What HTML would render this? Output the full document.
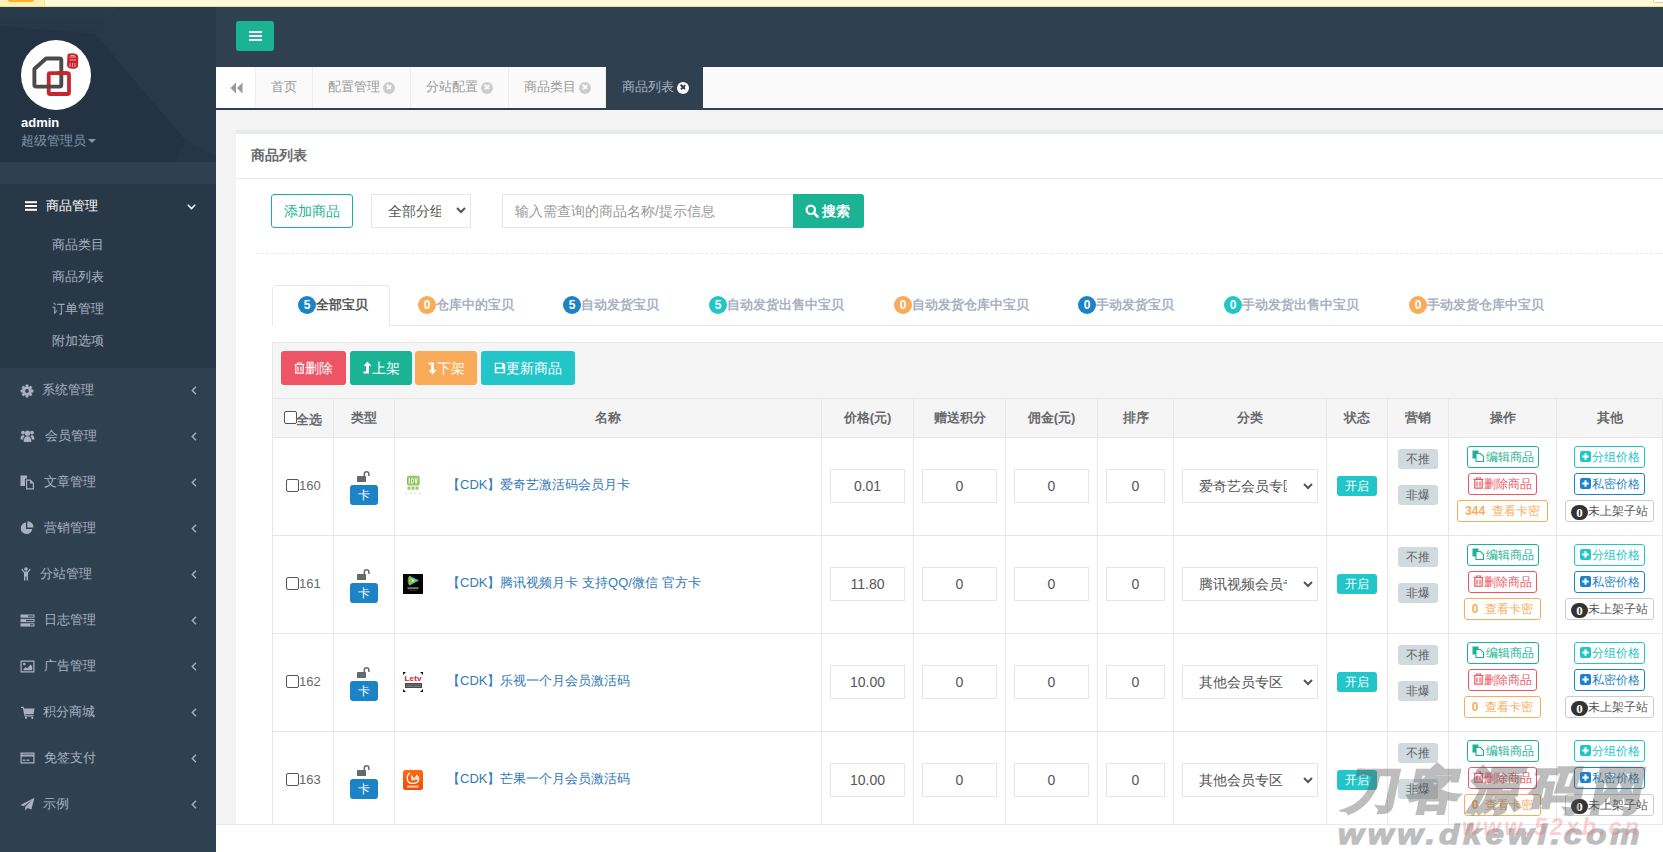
<!DOCTYPE html><html><head><meta charset="utf-8"><style>
*{box-sizing:border-box}
html,body{margin:0;padding:0;width:1663px;height:852px;overflow:hidden;background:#f3f3f4;font-family:"Liberation Sans",sans-serif;color:#676a6c;font-size:13px}
.a{position:absolute}
#topbar{position:absolute;left:0;top:0;width:1663px;height:7px;background:#fff8d9;border-bottom:1px solid #f1dd9a}
#side{position:absolute;left:0;top:7px;width:216px;height:845px;background:#2f4050;overflow:hidden}
.mi{position:absolute;left:0;width:216px;height:46px;color:#a7b1c2;font-size:13px}
.mi .t{position:absolute;top:0;line-height:46px;font-weight:normal;white-space:nowrap}
.mi svg.ic{position:absolute;top:16px}
.mi .ar{position:absolute;left:191px;top:19px}
.sub{position:absolute;left:52px;color:#a7b1c2;font-size:13px;line-height:32px;height:32px;white-space:nowrap}
#header{position:absolute;left:216px;top:7px;width:1447px;height:60px;background:#2f4050}
#tabs{position:absolute;left:216px;top:67px;width:1447px;height:43px;background:#fafafa;border-bottom:2px solid #2f4050}
.tab{position:absolute;top:0;height:41px;line-height:40px;color:#999;font-size:13px;border-right:1px solid #eee;white-space:nowrap}
.tab .x{display:inline-block;width:12px;height:12px;border-radius:50%;background:#ccc;position:relative;vertical-align:middle;margin-left:3px;top:0px}
.tab .x:before,.tab .x:after{content:"";position:absolute;left:5.3px;top:2.8px;width:1.5px;height:6.4px;background:#fafafa;transform:rotate(45deg)}
.tab .x:after{transform:rotate(-45deg)}
.card{position:absolute;left:236px;top:130px;width:1427px;height:722px;background:#fff;border-top:4px solid #e7eaec}
.btn{position:absolute;border-radius:3px;font-size:14px;text-align:center;white-space:nowrap}
.inp{position:absolute;border:1px solid #e5e6e7;background:#fff;font-size:14px;white-space:nowrap;overflow:hidden}
.bt{position:absolute;top:285px;height:41px;white-space:nowrap;font-size:13px;font-weight:600;color:#a7b1c2;line-height:40px}
.badge{display:inline-block;width:18px;height:18px;border-radius:9px;color:#fff;font-size:12px;font-weight:bold;line-height:18px;text-align:center;vertical-align:middle;position:relative;top:-1px}
.cols{position:absolute;top:398px;left:272px;width:1391px;height:427px}
.vl{position:absolute;top:0;width:1px;height:426px;background:#e7e7e7}
.hl{position:absolute;left:0;width:1390px;height:1px;background:#e7e7e7}
.th{position:absolute;top:0;height:39px;line-height:39px;text-align:center;font-weight:bold;font-size:13px;color:#676a6c;white-space:nowrap}
.cell{position:absolute;white-space:nowrap}
.ibox{position:absolute;width:75px;height:33px;border:1px solid #e5e6e7;text-align:center;line-height:31px;font-size:14px;color:#555;background:#fff}
.ob{position:absolute;height:22px;border:1px solid;border-radius:3px;font-size:12px;line-height:20px;text-align:center;white-space:nowrap;background:#fff}
.gl{position:absolute;left:1398px;width:40px;height:20px;border-radius:3px;background:#d1dade;color:#5e5e5e;font-size:12px;line-height:20px;text-align:center}
</style></head><body>
<div id="side">
<div class="a" style="left:0;top:0;width:216px;height:155px;overflow:hidden">
  <svg width="216" height="155" style="position:absolute;left:0;top:0">
   <defs><linearGradient id="g1" x1="0" y1="0" x2="0" y2="1"><stop offset="0" stop-color="#2a3b4b"/><stop offset="1" stop-color="#263747"/></linearGradient></defs>
   <rect width="216" height="155" fill="#243544"/>
   <polygon points="0,0 118,0 95,27 0,19" fill="url(#g1)"/>
   <polygon points="118,0 216,0 216,150 185,133 95,27" fill="#283949"/>
   <polygon points="0,19 95,27 185,133 176,155 0,155" fill="#233343"/>
   <polygon points="185,133 216,150 216,155 176,155" fill="#253646"/>
  </svg>
  <div class="a" style="left:21px;top:33px;width:70px;height:70px;border-radius:50%;background:#fff"></div>
  <svg class="a" style="left:21px;top:33px" width="70" height="70" viewBox="0 0 70 70">
   <rect x="27.7" y="33.2" width="20.3" height="20.8" rx="1.5" fill="none" stroke="#c8262e" stroke-width="3.8"/>
   <path d="M13.4 29 L25 18.5 L38.5 18.5 Q40.3 18.5 40.3 20.3 L40.3 44.8 Q40.3 46.6 38.5 46.6 L15.2 46.6 Q13.4 46.6 13.4 44.8 Z" fill="none" stroke="#4e4948" stroke-width="3.9" stroke-linejoin="round"/>
   <path d="M36 33.2 H46.2" stroke="#c8262e" stroke-width="3.8"/>
   <path d="M46.5 14.5 Q48 13 52 13.2 Q57.5 13.5 57.3 18 L57 26 Q56.5 29 51.5 28.8 Q46 28.5 46 25 Z" fill="#c8262e"/>
   <path d="M48.5 17 H55 M48.5 20 H55 M49 23 V27 M51.5 23 V27 M54 23 V27 M49.5 15.5 L53.5 15.5" stroke="#f3c6c8" stroke-width="0.8" fill="none"/>
  </svg>
  <div class="a" style="left:21px;top:108px;color:#fff;font-weight:bold;font-size:13px;line-height:16px">admin</div>
  <div class="a" style="left:21px;top:126px;color:#8095a8;font-size:13px;line-height:16px;white-space:nowrap">超级管理员<span style="display:inline-block;width:0;height:0;border-left:4px solid transparent;border-right:4px solid transparent;border-top:4px solid #8095a8;margin-left:2px;vertical-align:middle;position:relative;top:-1px"></span></div>
 </div>
<div class="a" style="left:0;top:177px;width:216px;height:184px;background:#293846"></div>
<svg class="a" style="left:25px;top:194px" width="12" height="10" viewBox="0 0 12 10"><g fill="#fff"><rect y="0.2" width="12" height="2"/><rect y="4" width="12" height="2"/><rect y="7.8" width="12" height="2"/></g></svg>
<div class="a" style="left:46px;top:189px;color:#fff;font-weight:normal;font-size:13px;line-height:20px">商品管理</div>
<svg class="a" style="left:187px;top:197px" width="9" height="6" viewBox="0 0 9 6"><path d="M0.8 0.8 L4.5 4.6 L8.2 0.8" fill="none" stroke="#fff" stroke-width="1.5"/></svg>
<div class="sub" style="top:222px">商品类目</div>
<div class="sub" style="top:254px">商品列表</div>
<div class="sub" style="top:286px">订单管理</div>
<div class="sub" style="top:318px">附加选项</div>
<div class="mi" style="top:360px"><svg class="ic" width="14" height="14" viewBox="0 0 14 14" style="left:20px;top:17px"><g fill="#a7b1c2"><circle cx="7" cy="7" r="4.6"/><rect x="5.6" y="0.6" width="2.8" height="12.8" rx="0.6"/><rect x="0.6" y="5.6" width="12.8" height="2.8" rx="0.6"/><rect x="5.6" y="0.6" width="2.8" height="12.8" rx="0.6" transform="rotate(45 7 7)"/><rect x="5.6" y="0.6" width="2.8" height="12.8" rx="0.6" transform="rotate(-45 7 7)"/></g><circle cx="7" cy="7" r="1.9" fill="#2f4050"/></svg><div class="t" style="left:42px">系统管理</div><svg class="ar" width="6" height="9" viewBox="0 0 6 9"><path d="M5 0.8 L1.3 4.5 L5 8.2" fill="none" stroke="#a7b1c2" stroke-width="1.4"/></svg></div>
<div class="mi" style="top:406px"><svg class="ic" width="15" height="14" viewBox="0 0 15 14" style="left:20px;top:16px"><g fill="#a7b1c2"><circle cx="7.5" cy="4.2" r="2.6"/><circle cx="3" cy="3.6" r="1.9"/><circle cx="12" cy="3.6" r="1.9"/><path d="M3.6 13 Q3.6 7.2 7.5 7.2 Q11.4 7.2 11.4 13 Z"/><path d="M0.6 10.5 Q0.6 6.2 3 6.2 Q4.2 6.2 4.6 6.9 Q3.2 8 3.1 10.5Z"/><path d="M14.4 10.5 Q14.4 6.2 12 6.2 Q10.8 6.2 10.4 6.9 Q11.8 8 11.9 10.5Z"/></g></svg><div class="t" style="left:45px">会员管理</div><svg class="ar" width="6" height="9" viewBox="0 0 6 9"><path d="M5 0.8 L1.3 4.5 L5 8.2" fill="none" stroke="#a7b1c2" stroke-width="1.4"/></svg></div>
<div class="mi" style="top:452px"><svg class="ic" width="15" height="15" viewBox="0 0 15 15" style="left:20px;top:16px"><g fill="#a7b1c2"><path d="M0.5 0.5 H7 V3.5 H5 V11 H0.5Z"/><path d="M6 4.5 H10.5 L14 8 V14.5 H6Z M7.2 5.7 V13.3 H12.8 V8.5 H10 V5.7Z"/></g></svg><div class="t" style="left:44px">文章管理</div><svg class="ar" width="6" height="9" viewBox="0 0 6 9"><path d="M5 0.8 L1.3 4.5 L5 8.2" fill="none" stroke="#a7b1c2" stroke-width="1.4"/></svg></div>
<div class="mi" style="top:498px"><svg class="ic" width="14" height="14" viewBox="0 0 14 14" style="left:20px;top:16px"><g fill="#a7b1c2"><path d="M6 1.5 A5.8 5.8 0 1 0 12.3 8 H6Z"/><path d="M7.3 0.3 A6 6 0 0 1 13.5 6.6 H7.3Z"/></g></svg><div class="t" style="left:44px">营销管理</div><svg class="ar" width="6" height="9" viewBox="0 0 6 9"><path d="M5 0.8 L1.3 4.5 L5 8.2" fill="none" stroke="#a7b1c2" stroke-width="1.4"/></svg></div>
<div class="mi" style="top:544px"><svg class="ic" width="10" height="14" viewBox="0 0 10 14" style="left:21px;top:16px"><g fill="#a7b1c2"><circle cx="5" cy="2" r="1.8"/><path d="M0.3 2.4 L1.3 1.8 L3.4 4.4 H6.6 L8.7 1.8 L9.7 2.4 L7 6 V13.5 H5.6 V9.5 H4.4 V13.5 H3 V6Z"/></g></svg><div class="t" style="left:40px">分站管理</div><svg class="ar" width="6" height="9" viewBox="0 0 6 9"><path d="M5 0.8 L1.3 4.5 L5 8.2" fill="none" stroke="#a7b1c2" stroke-width="1.4"/></svg></div>
<div class="mi" style="top:590px"><svg class="ic" width="15" height="13" viewBox="0 0 15 13" style="left:20px;top:17px"><g fill="#a7b1c2"><rect x="0.5" y="0.5" width="14" height="3.2"/><rect x="0.5" y="4.9" width="14" height="3.2"/><rect x="0.5" y="9.3" width="14" height="3.2"/></g><g fill="#2f4050"><rect x="8" y="1.5" width="5.5" height="1.2"/><rect x="6" y="5.9" width="7.5" height="1.2"/><rect x="10" y="10.3" width="3.5" height="1.2"/></g></svg><div class="t" style="left:44px">日志管理</div><svg class="ar" width="6" height="9" viewBox="0 0 6 9"><path d="M5 0.8 L1.3 4.5 L5 8.2" fill="none" stroke="#a7b1c2" stroke-width="1.4"/></svg></div>
<div class="mi" style="top:636px"><svg class="ic" width="15" height="13" viewBox="0 0 15 13" style="left:20px;top:17px"><path d="M0.5 0.5 H14.5 V12.5 H0.5Z M1.7 1.7 V11.3 H13.3 V1.7Z" fill="#a7b1c2"/><path d="M2.8 10.2 L5.5 7 L7.2 8.5 L10.5 4.5 L12.2 6.5 V10.2Z" fill="#a7b1c2"/><circle cx="4.3" cy="4" r="1.3" fill="#a7b1c2"/></svg><div class="t" style="left:44px">广告管理</div><svg class="ar" width="6" height="9" viewBox="0 0 6 9"><path d="M5 0.8 L1.3 4.5 L5 8.2" fill="none" stroke="#a7b1c2" stroke-width="1.4"/></svg></div>
<div class="mi" style="top:682px"><svg class="ic" width="14" height="13" viewBox="0 0 14 13" style="left:21px;top:17px"><g fill="#a7b1c2"><path d="M0 0.8 H2.6 L3.1 2.6 H13.6 L12.4 8.2 H4.2 L4.5 9.3 H12.5 V10.5 H3.6 L1.8 2 H0Z"/><circle cx="5" cy="11.8" r="1.1"/><circle cx="11.3" cy="11.8" r="1.1"/></g></svg><div class="t" style="left:43px">积分商城</div><svg class="ar" width="6" height="9" viewBox="0 0 6 9"><path d="M5 0.8 L1.3 4.5 L5 8.2" fill="none" stroke="#a7b1c2" stroke-width="1.4"/></svg></div>
<div class="mi" style="top:728px"><svg class="ic" width="15" height="12" viewBox="0 0 15 12" style="left:20px;top:17px"><path d="M0.5 0.5 H14.5 V11.5 H0.5Z M1.7 4.6 V10.3 H13.3 V4.6Z M1.7 1.7 V2.6 H13.3 V1.7Z" fill="#a7b1c2"/><rect x="2.7" y="7.6" width="2.6" height="1.2" fill="#a7b1c2"/><rect x="6.3" y="7.6" width="3" height="1.2" fill="#a7b1c2"/></svg><div class="t" style="left:44px">免签支付</div><svg class="ar" width="6" height="9" viewBox="0 0 6 9"><path d="M5 0.8 L1.3 4.5 L5 8.2" fill="none" stroke="#a7b1c2" stroke-width="1.4"/></svg></div>
<div class="mi" style="top:774px"><svg class="ic" width="15" height="14" viewBox="0 0 15 14" style="left:20px;top:16px"><path d="M14.5 0.8 L0.5 8 L3.8 9.3 L12.2 2.8 L5.2 10 V13.6 L7.6 11 L11.3 12.5Z" fill="#a7b1c2"/></svg><div class="t" style="left:43px">示例</div><svg class="ar" width="6" height="9" viewBox="0 0 6 9"><path d="M5 0.8 L1.3 4.5 L5 8.2" fill="none" stroke="#a7b1c2" stroke-width="1.4"/></svg></div>
</div>
<div id="topbar"><div class="a" style="left:0;top:0;width:45px;height:6px;background:#fdf0b4;border-right:1px solid #f3e2a4"></div><div class="a" style="left:8px;top:0;width:26px;height:2px;background:#ffb12b;border-radius:0 0 2px 2px"></div><div class="a" style="left:1653px;top:0;width:10px;height:3px;border:1px solid #e8d48a;border-top:0;border-right:0;border-radius:0 0 0 2px;background:#fff"></div></div>
<div id="header"><div class="a" style="left:20px;top:14px;width:38px;height:30px;background:#1ab394;border-radius:3px"></div>
<svg class="a" style="left:33px;top:24px" width="13" height="10" viewBox="0 0 13 10"><g fill="#fff"><rect y="0" width="13" height="2"/><rect y="4" width="13" height="2"/><rect y="8" width="13" height="2"/></g></svg></div>
<div id="tabs">
 <div class="a" style="left:0;top:0;width:40px;height:41px;background:#fff;border-right:1px solid #eee"></div>
 <svg class="a" style="left:14px;top:15px" width="13" height="12" viewBox="0 0 13 12"><path d="M6 0.5 L0.5 6 L6 11.5Z M12.5 0.5 L7 6 L12.5 11.5Z" fill="#999"/></svg>
 <div class="tab" style="left:40px;width:57px;padding-left:15px">首页</div>
 <div class="tab" style="left:97px;width:98px;padding-left:15px">配置管理<span class="x"></span></div>
 <div class="tab" style="left:195px;width:98px;padding-left:15px">分站配置<span class="x"></span></div>
 <div class="tab" style="left:293px;width:97px;padding-left:15px">商品类目<span class="x"></span></div>
 <div class="tab" style="left:390px;width:97px;padding-left:16px;background:#2f4050;color:#a7b1c2;border-right:0">商品列表<span class="x" style="background:#fff"></span></div>
</div>
<style>#tabs .tab:last-child .x:before,#tabs .tab:last-child .x:after{background:#2f4050}</style>
<div class="card"></div>
<div class="a" style="left:251px;top:146px;font-size:14px;font-weight:bold;color:#676a6c;line-height:18px">商品列表</div>
<div class="a" style="left:236px;top:178px;width:1427px;height:1px;background:#e7eaec"></div>
<div class="btn" style="left:271px;top:194px;width:82px;height:34px;border:1px solid #1ab394;color:#1ab394;line-height:32px;background:#fff">添加商品</div>
<div class="inp" style="left:371px;top:194px;width:100px;height:34px;color:#555;line-height:32px;padding-left:16px"><span style="display:inline-block;width:53px;overflow:hidden;vertical-align:top;white-space:nowrap">全部分组</span></div>
<svg class="a" style="left:456px;top:207px" width="10" height="7" viewBox="0 0 10 7"><path d="M1 1 L5 5 L9 1" fill="none" stroke="#555" stroke-width="2"/></svg>
<div class="inp" style="left:502px;top:194px;width:292px;height:34px;color:#999;line-height:32px;padding-left:12px">输入需查询的商品名称/提示信息</div>
<div class="btn" style="left:793px;top:194px;width:71px;height:34px;background:#1ab394;color:#fff;line-height:34px;font-weight:bold;border-radius:0 3px 3px 0;padding-left:12px;text-align:left">
<svg style="position:absolute;left:12px;top:10px" width="14" height="14" viewBox="0 0 14 14"><circle cx="5.8" cy="5.8" r="4.2" fill="none" stroke="#fff" stroke-width="2.2"/><path d="M8.8 8.8 L12.5 12.5" stroke="#fff" stroke-width="2.6" stroke-linecap="round"/></svg><span style="position:absolute;left:29px;top:0">搜索</span></div>
<div class="a" style="left:256px;top:253px;width:1407px;height:0;border-top:1px dashed #e7eaec"></div>
<div class="a" style="left:272px;top:325px;width:1391px;height:1px;background:#e7eaec"></div>
<div class="a" style="left:272px;top:285px;width:118px;height:41px;background:#fff;border:1px solid #e7eaec;border-bottom:0;border-radius:4px 4px 0 0"></div>
<div class="bt" style="left:298px;color:#555"><span class="badge" style="background:#1c84c6">5</span>全部宝贝</div>
<div class="bt" style="left:418px;"><span class="badge" style="background:#f8ac59">0</span>仓库中的宝贝</div>
<div class="bt" style="left:563px;"><span class="badge" style="background:#1c84c6">5</span>自动发货宝贝</div>
<div class="bt" style="left:709px;"><span class="badge" style="background:#23c6c8">5</span>自动发货出售中宝贝</div>
<div class="bt" style="left:894px;"><span class="badge" style="background:#f8ac59">0</span>自动发货仓库中宝贝</div>
<div class="bt" style="left:1078px;"><span class="badge" style="background:#1c84c6">0</span>手动发货宝贝</div>
<div class="bt" style="left:1224px;"><span class="badge" style="background:#23c6c8">0</span>手动发货出售中宝贝</div>
<div class="bt" style="left:1409px;"><span class="badge" style="background:#f8ac59">0</span>手动发货仓库中宝贝</div>
<div class="a" style="left:272px;top:342px;width:1391px;height:57px;background:#f5f5f5;border:1px solid #e7e7e7;border-bottom:0;border-right:0"></div>
<div class="btn" style="left:281px;top:351px;width:65px;height:34px;background:#ed5565;color:#fff;line-height:34px"><svg width="11" height="12" viewBox="0 0 11 12" style="vertical-align:-1px"><path d="M0.5 2.5 H10.5 M3.5 2.5 V1 H7.5 V2.5 M1.8 2.5 V11.2 H9.2 V2.5 M4 4.5 V9.5 M7 4.5 V9.5" fill="none" stroke="#fff" stroke-width="1.2"/></svg>删除</div>
<div class="btn" style="left:350px;top:351px;width:62px;height:34px;background:#1ab394;color:#fff;line-height:34px"><svg width="9" height="13" viewBox="0 0 9 13" style="vertical-align:-1px"><path d="M4.5 0.5 L8.5 5 H6 V12.5 H0.5 V10.5 H3 V5 H0.5Z" fill="#fff"/></svg>上架</div>
<div class="btn" style="left:415px;top:351px;width:62px;height:34px;background:#f8ac59;color:#fff;line-height:34px"><svg width="9" height="13" viewBox="0 0 9 13" style="vertical-align:-2px"><path d="M4.5 12.5 L8.5 8 H6 V0.5 H0.5 V2.5 H3 V8 H0.5Z" fill="#fff"/></svg>下架</div>
<div class="btn" style="left:481px;top:351px;width:94px;height:34px;background:#23c6c8;color:#fff;line-height:34px"><svg width="12" height="12" viewBox="0 0 12 12" style="vertical-align:-1px"><path d="M0.8 0.8 H9.5 L11.2 2.5 V11.2 H0.8Z M2 2 V5.2 H8.2 V2Z M2.5 6.8 V10 H9.5 V6.8Z" fill="#fff" fill-rule="evenodd"/></svg>更新商品</div>
<div class="a" style="left:272px;top:398px;width:1391px;height:39px;background:#f5f5f5"></div>
<div class="a" style="left:272px;top:398px;width:1px;height:427px;background:#e7e7e7"></div>
<div class="a" style="left:333px;top:398px;width:1px;height:427px;background:#e7e7e7"></div>
<div class="a" style="left:394px;top:398px;width:1px;height:427px;background:#e7e7e7"></div>
<div class="a" style="left:821px;top:398px;width:1px;height:427px;background:#e7e7e7"></div>
<div class="a" style="left:913px;top:398px;width:1px;height:427px;background:#e7e7e7"></div>
<div class="a" style="left:1005px;top:398px;width:1px;height:427px;background:#e7e7e7"></div>
<div class="a" style="left:1097px;top:398px;width:1px;height:427px;background:#e7e7e7"></div>
<div class="a" style="left:1173px;top:398px;width:1px;height:427px;background:#e7e7e7"></div>
<div class="a" style="left:1326px;top:398px;width:1px;height:427px;background:#e7e7e7"></div>
<div class="a" style="left:1387px;top:398px;width:1px;height:427px;background:#e7e7e7"></div>
<div class="a" style="left:1448px;top:398px;width:1px;height:427px;background:#e7e7e7"></div>
<div class="a" style="left:1556px;top:398px;width:1px;height:427px;background:#e7e7e7"></div>
<div class="a" style="left:1662px;top:398px;width:1px;height:427px;background:#e7e7e7"></div>
<div class="a" style="left:272px;top:398px;width:1391px;height:1px;background:#e7e7e7"></div>
<div class="a" style="left:272px;top:437px;width:1391px;height:1px;background:#e7e7e7"></div>
<div class="a" style="left:272px;top:535px;width:1391px;height:1px;background:#e7e7e7"></div>
<div class="a" style="left:272px;top:633px;width:1391px;height:1px;background:#e7e7e7"></div>
<div class="a" style="left:272px;top:731px;width:1391px;height:1px;background:#e7e7e7"></div>
<div class="a" style="left:272px;top:824px;width:1391px;height:1px;background:#e7e7e7"></div>
<div class="a" style="left:284px;top:411px;width:13px;height:13px;border:1px solid #555;border-radius:2px;background:#fff"></div><div class="a" style="left:296px;top:410px;font-weight:bold;font-size:13px;line-height:20px;color:#676a6c">全选</div>
<div class="th" style="left:334px;width:60px;top:398px">类型</div>
<div class="th" style="left:395px;width:426px;top:398px">名称</div>
<div class="th" style="left:822px;width:91px;top:398px">价格(元)</div>
<div class="th" style="left:914px;width:91px;top:398px">赠送积分</div>
<div class="th" style="left:1006px;width:91px;top:398px">佣金(元)</div>
<div class="th" style="left:1098px;width:75px;top:398px">排序</div>
<div class="th" style="left:1174px;width:152px;top:398px">分类</div>
<div class="th" style="left:1327px;width:60px;top:398px">状态</div>
<div class="th" style="left:1388px;width:60px;top:398px">营销</div>
<div class="th" style="left:1449px;width:107px;top:398px">操作</div>
<div class="th" style="left:1557px;width:105px;top:398px">其他</div>
<div class="a" style="left:286px;top:479px;width:13px;height:13px;border:1px solid #555;border-radius:2px;background:#fff"></div>
<div class="cell" style="left:299px;top:476px;font-size:13px;line-height:20px;color:#676a6c">160</div>
<svg class="a" style="left:357px;top:471px" width="13" height="11" viewBox="0 0 13 11"><rect x="0" y="5" width="9" height="6" rx="0.6" fill="#676a6c"/><path d="M7.3 5 V3 Q7.3 0.8 9.6 0.8 Q11.9 0.8 11.9 3 V5" fill="none" stroke="#676a6c" stroke-width="1.5"/></svg>
<div class="a" style="left:350px;top:485px;width:28px;height:20px;background:#1c84c6;border-radius:3px;color:#fff;text-align:center;font-size:12px;line-height:20px">卡</div>
<svg class="a" style="left:403px;top:475px" width="20" height="22" viewBox="0 0 20 22"><rect x="4" y="0.8" width="12.6" height="9.6" rx="2.2" fill="#7cbb42"/><rect x="5.4" y="2" width="9.8" height="7.2" rx="1" fill="none" stroke="#c9e6ae" stroke-width="0.7"/><path d="M6.6 3 V8.4 M8.6 3.5 Q10.8 3.5 10.8 5.8 Q10.8 8.3 8.6 8.3 Z M12 3 L13 8.4 L14.2 3" stroke="#fff" stroke-width="1" fill="none"/><g fill="#9ccc6a"><rect x="4.5" y="11.6" width="3" height="3.2"/><rect x="8.5" y="11.6" width="3" height="3.2"/><rect x="12.5" y="11.6" width="3" height="3.2"/></g><g fill="#e2e2e2"><rect x="2" y="17.5" width="2" height="1.8"/><rect x="7" y="17.5" width="2" height="1.8"/><rect x="11.5" y="17.5" width="2" height="1.8"/><rect x="16" y="17.5" width="2" height="1.8"/></g></svg>
<div class="cell" style="left:447px;top:475px;font-size:13px;line-height:20px;color:#337ab7">【CDK】爱奇艺激活码会员月卡</div>
<div class="ibox" style="left:830px;top:469px;width:75px;height:34px;line-height:32px">0.01</div>
<div class="ibox" style="left:922px;top:469px;width:75px;height:34px;line-height:32px">0</div>
<div class="ibox" style="left:1014px;top:469px;width:75px;height:34px;line-height:32px">0</div>
<div class="ibox" style="left:1106px;top:469px;width:59px;height:34px;line-height:32px">0</div>
<div class="ibox" style="left:1182px;top:469px;width:136px;height:34px;line-height:32px;text-align:left;padding-left:16px;overflow:hidden"><span style="display:inline-block;width:88px;overflow:hidden;vertical-align:top;white-space:nowrap">爱奇艺会员专区</span></div>
<svg class="a" style="left:1303px;top:483px" width="10" height="7" viewBox="0 0 10 7"><path d="M1 1 L5 5 L9 1" fill="none" stroke="#555" stroke-width="2"/></svg>
<div class="a" style="left:1337px;top:476px;width:40px;height:20px;border-radius:3px;background:#23c6c8;color:#fff;font-size:12px;line-height:20px;text-align:center">开启</div>
<div class="gl" style="top:449px">不推</div>
<div class="gl" style="top:485px">非爆</div>
<div class="ob" style="left:1467px;top:446px;width:72px;border-color:#1ab394;color:#1ab394"><svg width="13" height="12" viewBox="0 0 13 12" style="vertical-align:-1px;margin-right:1px"><rect x="0.5" y="0.5" width="6" height="8" fill="#1ab394"/><path d="M4 3.5 H8.5 L11.5 6.5 V11.5 H4Z" fill="#fff" stroke="#1ab394" stroke-width="1.1"/></svg>编辑商品</div>
<div class="ob" style="left:1468px;top:473px;width:69px;border-color:#ed5565;color:#ed5565"><svg width="11" height="12" viewBox="0 0 11 12" style="vertical-align:-1px"><path d="M0.5 2.5 H10.5 M3.5 2.5 V1 H7.5 V2.5 M1.8 2.5 V11.2 H9.2 V2.5 M4 4.5 V9.5 M7 4.5 V9.5" fill="none" stroke="#ed5565" stroke-width="1.2"/></svg>删除商品</div>
<div class="ob" style="left:1457px;top:500px;width:91px;border-color:#f8ac59;color:#f8ac59"><b>344</b>&nbsp; 查看卡密</div>
<div class="ob" style="left:1574px;top:446px;width:71px;border-color:#23c6c8;color:#23c6c8"><svg width="11" height="11" viewBox="0 0 11 11" style="vertical-align:-1px;margin-right:1px"><rect width="11" height="11" rx="2" fill="#23c6c8"/><path d="M5.5 2.3 V8.7 M2.3 5.5 H8.7" stroke="#fff" stroke-width="2"/></svg>分组价格</div>
<div class="ob" style="left:1574px;top:473px;width:71px;border-color:#1c84c6;color:#1c84c6"><svg width="11" height="11" viewBox="0 0 11 11" style="vertical-align:-1px;margin-right:1px"><rect width="11" height="11" rx="2" fill="#1c84c6"/><path d="M5.5 2.3 V8.7 M2.3 5.5 H8.7" stroke="#fff" stroke-width="2"/></svg>私密价格</div>
<div class="ob" style="left:1565px;top:500px;width:89px;border-color:#ccc;color:#555"><span style="display:inline-block;width:17px;height:15px;border-radius:8px;background:#333;color:#fff;font-family:'Liberation Serif',serif;font-weight:bold;font-size:13px;line-height:15px;vertical-align:-2px">0</span>未上架子站</div>
<div class="a" style="left:286px;top:577px;width:13px;height:13px;border:1px solid #555;border-radius:2px;background:#fff"></div>
<div class="cell" style="left:299px;top:574px;font-size:13px;line-height:20px;color:#676a6c">161</div>
<svg class="a" style="left:357px;top:569px" width="13" height="11" viewBox="0 0 13 11"><rect x="0" y="5" width="9" height="6" rx="0.6" fill="#676a6c"/><path d="M7.3 5 V3 Q7.3 0.8 9.6 0.8 Q11.9 0.8 11.9 3 V5" fill="none" stroke="#676a6c" stroke-width="1.5"/></svg>
<div class="a" style="left:350px;top:583px;width:28px;height:20px;background:#1c84c6;border-radius:3px;color:#fff;text-align:center;font-size:12px;line-height:20px">卡</div>
<svg class="a" style="left:403px;top:574px" width="20" height="20" viewBox="0 0 20 20"><rect width="20" height="20" fill="#020202"/><path d="M6.2 1.6 L16 6.6 L6.2 11.8 Q5 8 5.8 4 Z" fill="#2bb6e8"/><path d="M6 2.6 L13.8 6.6 L6 10.8 Q4.8 6.8 6 2.6Z" fill="#8cc63e"/><path d="M6 2.6 Q4.6 6.8 6 10.8 Q5.2 10.4 5 9 Q4.4 6.6 5 4.2 Q5.3 3 6 2.6Z" fill="#f07a18"/><path d="M9 5 L11.3 6.6 L9 8.2Z" fill="#e8f5d0"/><rect x="4.5" y="13.2" width="11" height="2" fill="#777"/><rect x="6" y="16.2" width="8" height="0.8" fill="#333"/></svg>
<div class="cell" style="left:447px;top:573px;font-size:13px;line-height:20px;color:#337ab7">【CDK】腾讯视频月卡 支持QQ/微信 官方卡</div>
<div class="ibox" style="left:830px;top:567px;width:75px;height:34px;line-height:32px">11.80</div>
<div class="ibox" style="left:922px;top:567px;width:75px;height:34px;line-height:32px">0</div>
<div class="ibox" style="left:1014px;top:567px;width:75px;height:34px;line-height:32px">0</div>
<div class="ibox" style="left:1106px;top:567px;width:59px;height:34px;line-height:32px">0</div>
<div class="ibox" style="left:1182px;top:567px;width:136px;height:34px;line-height:32px;text-align:left;padding-left:16px;overflow:hidden"><span style="display:inline-block;width:88px;overflow:hidden;vertical-align:top;white-space:nowrap">腾讯视频会员专区</span></div>
<svg class="a" style="left:1303px;top:581px" width="10" height="7" viewBox="0 0 10 7"><path d="M1 1 L5 5 L9 1" fill="none" stroke="#555" stroke-width="2"/></svg>
<div class="a" style="left:1337px;top:574px;width:40px;height:20px;border-radius:3px;background:#23c6c8;color:#fff;font-size:12px;line-height:20px;text-align:center">开启</div>
<div class="gl" style="top:547px">不推</div>
<div class="gl" style="top:583px">非爆</div>
<div class="ob" style="left:1467px;top:544px;width:72px;border-color:#1ab394;color:#1ab394"><svg width="13" height="12" viewBox="0 0 13 12" style="vertical-align:-1px;margin-right:1px"><rect x="0.5" y="0.5" width="6" height="8" fill="#1ab394"/><path d="M4 3.5 H8.5 L11.5 6.5 V11.5 H4Z" fill="#fff" stroke="#1ab394" stroke-width="1.1"/></svg>编辑商品</div>
<div class="ob" style="left:1468px;top:571px;width:69px;border-color:#ed5565;color:#ed5565"><svg width="11" height="12" viewBox="0 0 11 12" style="vertical-align:-1px"><path d="M0.5 2.5 H10.5 M3.5 2.5 V1 H7.5 V2.5 M1.8 2.5 V11.2 H9.2 V2.5 M4 4.5 V9.5 M7 4.5 V9.5" fill="none" stroke="#ed5565" stroke-width="1.2"/></svg>删除商品</div>
<div class="ob" style="left:1464px;top:598px;width:77px;border-color:#f8ac59;color:#f8ac59"><b>0</b>&nbsp; 查看卡密</div>
<div class="ob" style="left:1574px;top:544px;width:71px;border-color:#23c6c8;color:#23c6c8"><svg width="11" height="11" viewBox="0 0 11 11" style="vertical-align:-1px;margin-right:1px"><rect width="11" height="11" rx="2" fill="#23c6c8"/><path d="M5.5 2.3 V8.7 M2.3 5.5 H8.7" stroke="#fff" stroke-width="2"/></svg>分组价格</div>
<div class="ob" style="left:1574px;top:571px;width:71px;border-color:#1c84c6;color:#1c84c6"><svg width="11" height="11" viewBox="0 0 11 11" style="vertical-align:-1px;margin-right:1px"><rect width="11" height="11" rx="2" fill="#1c84c6"/><path d="M5.5 2.3 V8.7 M2.3 5.5 H8.7" stroke="#fff" stroke-width="2"/></svg>私密价格</div>
<div class="ob" style="left:1565px;top:598px;width:89px;border-color:#ccc;color:#555"><span style="display:inline-block;width:17px;height:15px;border-radius:8px;background:#333;color:#fff;font-family:'Liberation Serif',serif;font-weight:bold;font-size:13px;line-height:15px;vertical-align:-2px">0</span>未上架子站</div>
<div class="a" style="left:286px;top:675px;width:13px;height:13px;border:1px solid #555;border-radius:2px;background:#fff"></div>
<div class="cell" style="left:299px;top:672px;font-size:13px;line-height:20px;color:#676a6c">162</div>
<svg class="a" style="left:357px;top:667px" width="13" height="11" viewBox="0 0 13 11"><rect x="0" y="5" width="9" height="6" rx="0.6" fill="#676a6c"/><path d="M7.3 5 V3 Q7.3 0.8 9.6 0.8 Q11.9 0.8 11.9 3 V5" fill="none" stroke="#676a6c" stroke-width="1.5"/></svg>
<div class="a" style="left:350px;top:681px;width:28px;height:20px;background:#1c84c6;border-radius:3px;color:#fff;text-align:center;font-size:12px;line-height:20px">卡</div>
<svg class="a" style="left:403px;top:672px" width="20" height="20" viewBox="0 0 20 20"><rect width="20" height="20" fill="#fff"/><text x="10" y="9.2" font-family="Liberation Sans" font-size="7.6" font-weight="bold" fill="#dc1e28" text-anchor="middle" textLength="17" lengthAdjust="spacingAndGlyphs">Letv</text><rect x="2" y="11" width="17" height="5" fill="#4a4a4a"/><path d="M3 12.8 H18 M3 14.5 H18" stroke="#9a9a9a" stroke-width="0.6"/><path d="M0 0 H3 L0 3Z M20 0 H17 L20 3Z M0 20 H3 L0 17Z M20 20 H17 L20 17Z" fill="#111"/></svg>
<div class="cell" style="left:447px;top:671px;font-size:13px;line-height:20px;color:#337ab7">【CDK】乐视一个月会员激活码</div>
<div class="ibox" style="left:830px;top:665px;width:75px;height:34px;line-height:32px">10.00</div>
<div class="ibox" style="left:922px;top:665px;width:75px;height:34px;line-height:32px">0</div>
<div class="ibox" style="left:1014px;top:665px;width:75px;height:34px;line-height:32px">0</div>
<div class="ibox" style="left:1106px;top:665px;width:59px;height:34px;line-height:32px">0</div>
<div class="ibox" style="left:1182px;top:665px;width:136px;height:34px;line-height:32px;text-align:left;padding-left:16px;overflow:hidden"><span style="display:inline-block;width:88px;overflow:hidden;vertical-align:top;white-space:nowrap">其他会员专区</span></div>
<svg class="a" style="left:1303px;top:679px" width="10" height="7" viewBox="0 0 10 7"><path d="M1 1 L5 5 L9 1" fill="none" stroke="#555" stroke-width="2"/></svg>
<div class="a" style="left:1337px;top:672px;width:40px;height:20px;border-radius:3px;background:#23c6c8;color:#fff;font-size:12px;line-height:20px;text-align:center">开启</div>
<div class="gl" style="top:645px">不推</div>
<div class="gl" style="top:681px">非爆</div>
<div class="ob" style="left:1467px;top:642px;width:72px;border-color:#1ab394;color:#1ab394"><svg width="13" height="12" viewBox="0 0 13 12" style="vertical-align:-1px;margin-right:1px"><rect x="0.5" y="0.5" width="6" height="8" fill="#1ab394"/><path d="M4 3.5 H8.5 L11.5 6.5 V11.5 H4Z" fill="#fff" stroke="#1ab394" stroke-width="1.1"/></svg>编辑商品</div>
<div class="ob" style="left:1468px;top:669px;width:69px;border-color:#ed5565;color:#ed5565"><svg width="11" height="12" viewBox="0 0 11 12" style="vertical-align:-1px"><path d="M0.5 2.5 H10.5 M3.5 2.5 V1 H7.5 V2.5 M1.8 2.5 V11.2 H9.2 V2.5 M4 4.5 V9.5 M7 4.5 V9.5" fill="none" stroke="#ed5565" stroke-width="1.2"/></svg>删除商品</div>
<div class="ob" style="left:1464px;top:696px;width:77px;border-color:#f8ac59;color:#f8ac59"><b>0</b>&nbsp; 查看卡密</div>
<div class="ob" style="left:1574px;top:642px;width:71px;border-color:#23c6c8;color:#23c6c8"><svg width="11" height="11" viewBox="0 0 11 11" style="vertical-align:-1px;margin-right:1px"><rect width="11" height="11" rx="2" fill="#23c6c8"/><path d="M5.5 2.3 V8.7 M2.3 5.5 H8.7" stroke="#fff" stroke-width="2"/></svg>分组价格</div>
<div class="ob" style="left:1574px;top:669px;width:71px;border-color:#1c84c6;color:#1c84c6"><svg width="11" height="11" viewBox="0 0 11 11" style="vertical-align:-1px;margin-right:1px"><rect width="11" height="11" rx="2" fill="#1c84c6"/><path d="M5.5 2.3 V8.7 M2.3 5.5 H8.7" stroke="#fff" stroke-width="2"/></svg>私密价格</div>
<div class="ob" style="left:1565px;top:696px;width:89px;border-color:#ccc;color:#555"><span style="display:inline-block;width:17px;height:15px;border-radius:8px;background:#333;color:#fff;font-family:'Liberation Serif',serif;font-weight:bold;font-size:13px;line-height:15px;vertical-align:-2px">0</span>未上架子站</div>
<div class="a" style="left:286px;top:773px;width:13px;height:13px;border:1px solid #555;border-radius:2px;background:#fff"></div>
<div class="cell" style="left:299px;top:770px;font-size:13px;line-height:20px;color:#676a6c">163</div>
<svg class="a" style="left:357px;top:765px" width="13" height="11" viewBox="0 0 13 11"><rect x="0" y="5" width="9" height="6" rx="0.6" fill="#676a6c"/><path d="M7.3 5 V3 Q7.3 0.8 9.6 0.8 Q11.9 0.8 11.9 3 V5" fill="none" stroke="#676a6c" stroke-width="1.5"/></svg>
<div class="a" style="left:350px;top:779px;width:28px;height:20px;background:#1c84c6;border-radius:3px;color:#fff;text-align:center;font-size:12px;line-height:20px">卡</div>
<svg class="a" style="left:403px;top:770px" width="20" height="20" viewBox="0 0 20 20"><defs><linearGradient id="mg" x1="0" y1="0" x2="0" y2="1"><stop offset="0" stop-color="#ff6a0c"/><stop offset="1" stop-color="#f24a0c"/></linearGradient></defs><rect width="20" height="20" rx="2.5" fill="url(#mg)"/><path d="M7 3.2 Q4.3 4 4.3 8.2 Q4.3 13.4 9.5 13.4 Q15.5 13.4 15.5 9.8 V6.5" fill="none" stroke="#fff" stroke-width="1.3"/><path d="M9 10.5 V6.5 L11.5 9.8 L14 5 V10" fill="none" stroke="#fff" stroke-width="1.3"/><rect x="4" y="15.6" width="11.5" height="2" fill="#ffc9a8"/></svg>
<div class="cell" style="left:447px;top:769px;font-size:13px;line-height:20px;color:#337ab7">【CDK】芒果一个月会员激活码</div>
<div class="ibox" style="left:830px;top:763px;width:75px;height:34px;line-height:32px">10.00</div>
<div class="ibox" style="left:922px;top:763px;width:75px;height:34px;line-height:32px">0</div>
<div class="ibox" style="left:1014px;top:763px;width:75px;height:34px;line-height:32px">0</div>
<div class="ibox" style="left:1106px;top:763px;width:59px;height:34px;line-height:32px">0</div>
<div class="ibox" style="left:1182px;top:763px;width:136px;height:34px;line-height:32px;text-align:left;padding-left:16px;overflow:hidden"><span style="display:inline-block;width:88px;overflow:hidden;vertical-align:top;white-space:nowrap">其他会员专区</span></div>
<svg class="a" style="left:1303px;top:777px" width="10" height="7" viewBox="0 0 10 7"><path d="M1 1 L5 5 L9 1" fill="none" stroke="#555" stroke-width="2"/></svg>
<div class="a" style="left:1337px;top:770px;width:40px;height:20px;border-radius:3px;background:#23c6c8;color:#fff;font-size:12px;line-height:20px;text-align:center">开启</div>
<div class="gl" style="top:743px">不推</div>
<div class="gl" style="top:779px">非爆</div>
<div class="ob" style="left:1467px;top:740px;width:72px;border-color:#1ab394;color:#1ab394"><svg width="13" height="12" viewBox="0 0 13 12" style="vertical-align:-1px;margin-right:1px"><rect x="0.5" y="0.5" width="6" height="8" fill="#1ab394"/><path d="M4 3.5 H8.5 L11.5 6.5 V11.5 H4Z" fill="#fff" stroke="#1ab394" stroke-width="1.1"/></svg>编辑商品</div>
<div class="ob" style="left:1468px;top:767px;width:69px;border-color:#ed5565;color:#ed5565"><svg width="11" height="12" viewBox="0 0 11 12" style="vertical-align:-1px"><path d="M0.5 2.5 H10.5 M3.5 2.5 V1 H7.5 V2.5 M1.8 2.5 V11.2 H9.2 V2.5 M4 4.5 V9.5 M7 4.5 V9.5" fill="none" stroke="#ed5565" stroke-width="1.2"/></svg>删除商品</div>
<div class="ob" style="left:1464px;top:794px;width:77px;border-color:#f8ac59;color:#f8ac59"><b>0</b>&nbsp; 查看卡密</div>
<div class="ob" style="left:1574px;top:740px;width:71px;border-color:#23c6c8;color:#23c6c8"><svg width="11" height="11" viewBox="0 0 11 11" style="vertical-align:-1px;margin-right:1px"><rect width="11" height="11" rx="2" fill="#23c6c8"/><path d="M5.5 2.3 V8.7 M2.3 5.5 H8.7" stroke="#fff" stroke-width="2"/></svg>分组价格</div>
<div class="ob" style="left:1574px;top:767px;width:71px;border-color:#1c84c6;color:#1c84c6"><svg width="11" height="11" viewBox="0 0 11 11" style="vertical-align:-1px;margin-right:1px"><rect width="11" height="11" rx="2" fill="#1c84c6"/><path d="M5.5 2.3 V8.7 M2.3 5.5 H8.7" stroke="#fff" stroke-width="2"/></svg>私密价格</div>
<div class="ob" style="left:1565px;top:794px;width:89px;border-color:#ccc;color:#555"><span style="display:inline-block;width:17px;height:15px;border-radius:8px;background:#333;color:#fff;font-family:'Liberation Serif',serif;font-weight:bold;font-size:13px;line-height:15px;vertical-align:-2px">0</span>未上架子站</div>
<div class="a" style="left:216px;top:824px;width:1447px;height:28px;background:#fff;border-top:1px solid #e7eaec"></div>
<div class="a" style="left:1342px;top:753px;font-size:52px;line-height:70px;font-weight:900;color:#555;-webkit-text-stroke:3px #555;opacity:0.38;white-space:nowrap;transform:skewX(-12deg) scaleY(0.95);transform-origin:0 100%;letter-spacing:9px">刀客源码网</div>
<div class="a" style="left:1338px;top:813px;font-family:'Liberation Sans',sans-serif;font-size:33px;line-height:38px;font-weight:bold;font-style:italic;color:#555;-webkit-text-stroke:1.5px #555;opacity:0.38;white-space:nowrap;letter-spacing:4px;transform:scaleY(0.85);transform-origin:0 100%">www.dkewl.com</div>
<div class="a" style="left:1462px;top:814px;font-family:'Liberation Sans',sans-serif;font-size:23px;line-height:26px;font-weight:bold;font-style:italic;color:rgba(240,90,100,0.28);white-space:nowrap;letter-spacing:3.2px">www.52xb.cn</div>
</body></html>
